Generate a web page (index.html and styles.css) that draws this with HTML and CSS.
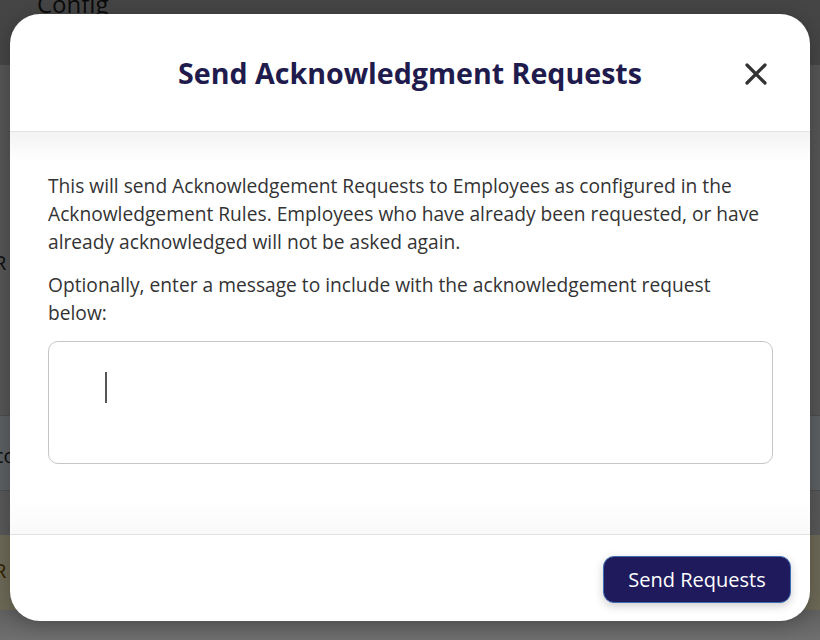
FILE: index.html
```html
<!DOCTYPE html>
<html lang="en">
<head>
<meta charset="utf-8">
<title>Send Acknowledgment Requests</title>
<link rel="stylesheet" href="styles.css">
</head>
<body>
<div class="page">
  <div class="topbar"><span class="topbar-title">Config</span></div>
  <div class="section section-main"><span class="row-text row-text-r">R</span></div>
  <div class="section section-row"><span class="row-text">co</span></div>
  <div class="section section-gap"></div>
  <div class="section section-warn"><span class="row-text row-text-warn">R</span></div>
  <div class="section section-end"></div>
</div>

<div class="overlay">
  <div class="modal" role="dialog" aria-labelledby="modal-title">
    <header class="modal-header">
      <h2 id="modal-title" class="modal-title">Send Acknowledgment Requests</h2>
      <button class="close-btn" aria-label="Close">
        <svg width="22" height="22" viewBox="0 0 22 22" aria-hidden="true">
          <path d="M2 2 L20 20 M20 2 L2 20" stroke="#333" stroke-width="3.2" stroke-linecap="round" fill="none"/>
        </svg>
      </button>
    </header>
    <div class="modal-body">
      <p class="modal-text">This will send Acknowledgement Requests to Employees as configured in the Acknowledgement Rules. Employees who have already been requested, or have already acknowledged will not be asked again.</p>
      <p class="modal-text">Optionally, enter a message to include with the acknowledgement request below:</p>
      <div class="message-box"><span class="caret"></span></div>
    </div>
    <footer class="modal-footer">
      <button class="primary-btn">Send Requests</button>
    </footer>
  </div>
</div>
</body>
</html>
```

FILE: styles.css
```css
* { box-sizing: border-box; }

html, body {
  margin: 0;
  padding: 0;
  width: 820px;
  height: 640px;
  overflow: hidden;
  font-family: "Open Sans", "Liberation Sans", sans-serif;
}

body { position: relative; }

.page {
  display: flex;
  flex-direction: column;
  height: 640px;
  background: #fff;
}

.topbar {
  height: 65px;
  background: #9a9a9a;
  padding-left: 37px;
  overflow: hidden;
}

.topbar-title {
  display: block;
  font-size: 24px;
  line-height: 24px;
  margin-top: -8px;
  color: #1a1a1a;
}

.section { position: relative; overflow: hidden; }
.section-main { height: 350px; background: #bcbcbc; }
.section-row { height: 75px; background: #cfd6dc; border-top: 1px solid #aaa; }
.section-gap { height: 45px; background: #c4c4c4; border-top: 1px solid #aaa; }
.section-warn { height: 75px; background: #f0e8c0; }
.section-end { flex: 1; background: linear-gradient(#d6d6d6, #f6f6f6); }

.row-text {
  display: block;
  font-size: 20px;
  color: #222;
  margin-left: -6px;
}
.section-main .row-text { margin-top: 184px; }
.section-row .row-text { margin-top: 26px; }
.row-text-warn { margin-top: 22px; color: #6a4d00; }

.overlay {
  position: absolute;
  inset: 0;
  background: rgba(0, 0, 0, 0.55);
}

.modal {
  position: absolute;
  left: 10px;
  top: 14px;
  width: 800px;
  height: 607px;
  background: #fff;
  border-radius: 30px;
  display: flex;
  flex-direction: column;
  overflow: hidden;
  box-shadow: 0 4px 20px rgba(0,0,0,0.25);
}

.modal-header {
  height: 118px;
  flex: none;
  border-bottom: 1px solid #e3e3e3;
  display: flex;
  align-items: center;
  justify-content: center;
  position: relative;
  padding-bottom: 0;
}

.modal-title {
  margin: 0;
  font-size: 28.6px;
  font-weight: 700;
  color: #1f1b4d;
}

.close-btn {
  position: absolute;
  right: 43px;
  top: 49px;
  width: 22px;
  height: 22px;
  padding: 0;
  border: 0;
  background: none;
  display: flex;
}

.modal-body {
  flex: 1;
  padding: 40px 37px 0 38px;
  background:
    linear-gradient(#f3f3f3, rgba(255,255,255,0) 30px),
    linear-gradient(to top, #f9f9f9, rgba(255,255,255,0) 36px),
    #fff;
}

.modal-text {
  margin: 0 0 15px;
  font-size: 19.2px;
  line-height: 28px;
  color: #333;
}

.message-box {
  margin-top: -1px;
  height: 123px;
  border: 1px solid #c6c6c6;
  border-radius: 10px;
  padding: 30px 0 0 56px;
}

.caret {
  display: block;
  width: 2px;
  height: 31px;
  background: #555;
}

.modal-footer {
  flex: none;
  height: 87px;
  border-top: 1px solid #e3e3e3;
  display: flex;
  justify-content: flex-end;
  align-items: flex-start;
  padding: 21px 19px 0 0;
}

.primary-btn {
  width: 188px;
  height: 47px;
  border-radius: 11px;
  background: #1e1a5c;
  border: 1.5px solid #3f6db4;
  color: #fff;
  font-family: "Open Sans", "Liberation Sans", sans-serif;
  font-size: 20px;
  font-weight: 400;
  box-shadow: 0 3px 10px rgba(0,0,0,0.2);
  padding: 0;
}
```
